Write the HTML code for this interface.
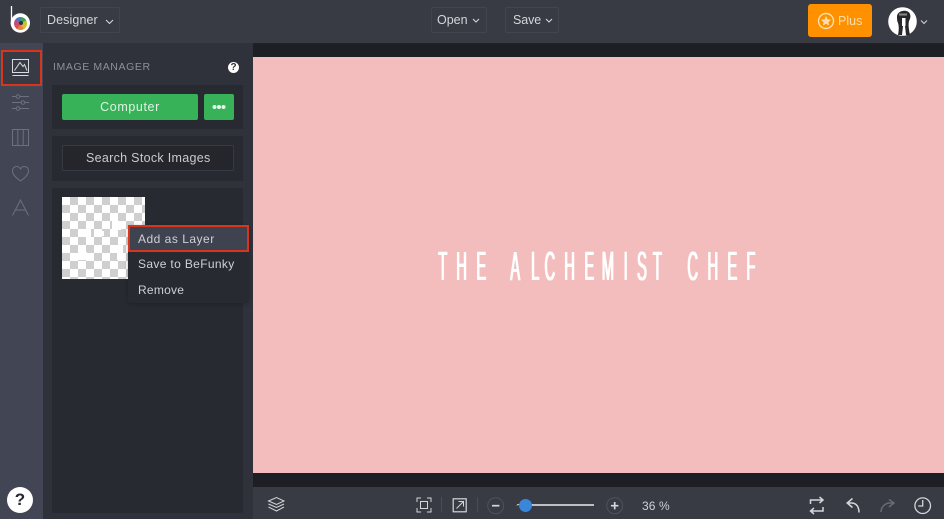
<!DOCTYPE html>
<html><head><meta charset="utf-8">
<style>
*{box-sizing:border-box}
html,body{margin:0;padding:0}
body{width:944px;height:519px;overflow:hidden;position:relative;background:#1f2025;font-family:"Liberation Sans",sans-serif;color:#d5d6da}
.a{position:absolute}
.t{position:absolute;white-space:nowrap}
.box{position:absolute;border:1px solid #41434e;border-radius:2px}
svg{position:absolute;overflow:visible}
</style></head><body>
<div class="a" style="left:253px;top:43px;width:691px;height:14px;background:#1e1f24"></div>
<div class="a" style="left:253px;top:57px;width:691px;height:416px;background:#f4bdbd"></div>
<div class="a" style="left:253px;top:473px;width:691px;height:14px;background:#1e1f24"></div>
<svg style="left:0;top:0" width="944" height="519">
<defs><filter id="w" x="-2%" y="-10%" width="104%" height="120%" filterUnits="objectBoundingBox"><feOffset in="SourceGraphic" dx="1" dy="0" result="o"/><feMerge><feMergeNode in="SourceGraphic"/><feMergeNode in="o"/></feMerge></filter></defs>
<g filter="url(#w)"><text transform="translate(0,280) scale(.36,1)" x="1216 1266 1322 1380 1416 1474 1511 1566 1622 1670 1731 1768 1812 1880 1908 1964 2019 2072" y="0" font-family="Liberation Sans" font-size="41" fill="#fff">THE ALCHEMIST CHEF</text></g></svg>

<div class="a" style="left:0;top:0;width:944px;height:43px;background:#383a44;box-shadow:0 1px 2px #22232a"></div>
<div class="a" style="left:0;top:43px;width:43px;height:476px;background:#424553"></div>
<div class="a" style="left:43px;top:43px;width:210px;height:476px;background:#30323b"></div>
<div class="a" style="left:253px;top:487px;width:691px;height:32px;background:#383a44"></div>

<!-- logo -->
<svg style="left:0;top:0" width="40" height="40">
<path d="M11.500 6V24" stroke="#fff" stroke-width="1.300" fill="none"/>
<circle cx="20.300" cy="23" r="9.700" fill="#fff"/>
</svg>
<div class="a" style="left:14px;top:16.500px;width:13px;height:13px;border-radius:50%;background:conic-gradient(#3f9f52 0 17%,#c5c533 17% 30%,#e8b32e 30% 42%,#e8823a 42% 58%,#d84f50 58% 72%,#c04a90 72% 86%,#3a7fc0 86% 100%)"></div>
<div class="a" style="left:18.500px;top:21px;width:4px;height:4px;border-radius:50%;background:#30323b"></div>
<div class="box" style="left:40px;top:7px;width:80px;height:26px;border-color:#42444f"></div>
<div class="t" style="left:47px;top:13px;font-size:12.500px;letter-spacing:.1px">Designer</div>
<svg style="left:105px;top:19px" width="10" height="6"><path d="M1 1l3.500 3.500L8 1" stroke="#d5d6da" fill="none" stroke-width="1.100"/></svg>

<div class="box" style="left:431px;top:7px;width:56px;height:26px;border-color:#42444f"></div>
<div class="t" style="left:437px;top:13px;font-size:12.500px">Open</div>
<svg style="left:472px;top:18px" width="10" height="6"><path d="M1 1l3 3 3-3" stroke="#d5d6da" fill="none" stroke-width="1.100"/></svg>
<div class="box" style="left:505px;top:7px;width:54px;height:26px;border-color:#42444f"></div>
<div class="t" style="left:513px;top:13px;font-size:12.500px;letter-spacing:-.1px">Save</div>
<svg style="left:545px;top:18px" width="10" height="6"><path d="M1 1l3 3 3-3" stroke="#d5d6da" fill="none" stroke-width="1.100"/></svg>

<div class="a" style="left:808px;top:4px;width:64px;height:33px;background:#ff9100;border-radius:3px"></div>
<svg style="left:817px;top:12px" width="18" height="18"><circle cx="9" cy="9" r="7.500" fill="none" stroke="#ffe0ac" stroke-width="1.400"/><path d="M9 4l1.500 3.300 3.500.4-2.600 2.400.7 3.500-3.100-1.800-3.100 1.800.7-3.500L4 7.700l3.500-.4z" fill="#ffe0ac"/></svg>
<div class="t" style="left:838px;top:14px;font-size:12.500px;color:#ffdca6">Plus</div>
<svg style="left:888px;top:7px" width="40" height="30">
<circle cx="14.500" cy="14.500" r="14.300" fill="#fff"/>
<path d="M9 9c1-6 11-7 13-2 1 3 0 5-1 7-1 4 0 9 1 14h-4l-1-9-2 0-1 9-4 0c1-5 1-9 0-12-1-2-1-4-1-7z" fill="#26262b"/>
<path d="M11 6.500h8v2h-8z" fill="#8a8a8a"/>
<path d="M14 11h3.500v8h-3.500z" fill="#fff"/>
<path d="M33 13.500l3 3 3-3" stroke="#cfd0d5" fill="none" stroke-width="1.100"/>
</svg>

<!-- rail -->
<div class="a" style="left:1px;top:50px;width:41px;height:36px;background:#383a45;border:2px solid #d9341c"></div>
<svg style="left:0;top:43px" width="43" height="190" fill="none" stroke="#d9dade" stroke-width="1">
<rect x="12.500" y="16.500" width="16" height="13"/>
<path d="M14.500 27.500l5.500-8 3 4 1.500-2 2.500 6"/>
<path d="M12.500 32.500h16"/>
<g stroke="#6d707d">
<path d="M12 53.500h17M12 59.500h17M12 65.500h17"/>
<circle cx="18" cy="53.500" r="1.800" fill="#424553"/><circle cx="23" cy="59.500" r="1.800" fill="#424553"/><circle cx="18" cy="65.500" r="1.800" fill="#424553"/>
<rect x="12.500" y="86.500" width="16" height="16"/><path d="M17.800 87v15M23.200 87v15"/>
<path d="M20.500 138c-4-3-8-6-8-10 0-5 6-6 8-2 2-4 8-3 8 2 0 4-4 7-8 10z"/>
<path d="M12.500 172.500l8-15.500 8 15.500M15.300 167h10.400"/>
</g>
</svg>
<div class="a" style="left:7px;top:487px;width:26px;height:26px;background:#fff;border-radius:50%;color:#26272d;font-weight:bold;font-size:17px;line-height:26px;text-align:center">?</div>

<!-- panel -->
<div class="t" style="left:53px;top:61px;font-size:10.500px;letter-spacing:.6px;color:#8d8f99">IMAGE MANAGER</div>
<div class="a" style="left:228px;top:62px;width:11px;height:11px;background:#fff;border-radius:50%;color:#30323b;font-weight:bold;font-size:10px;line-height:11px;text-align:center">?</div>
<div class="a" style="left:52px;top:85px;width:191px;height:44px;background:#282a31"></div>
<div class="a" style="left:62px;top:94px;width:136px;height:26px;background:#38b258;border-radius:2px;color:#dff3e5;font-size:12.500px;line-height:26px;text-align:center;letter-spacing:.6px">Computer</div>
<div class="a" style="left:204px;top:94px;width:30px;height:26px;background:#38b258;border-radius:2px"></div>
<svg style="left:204px;top:94px" width="30" height="26" fill="#e5f5ea"><circle cx="10.500" cy="13" r="2"/><circle cx="15" cy="13" r="2"/><circle cx="19.500" cy="13" r="2"/></svg>
<div class="a" style="left:52px;top:136px;width:191px;height:45px;background:#282a31"></div>
<div class="box" style="left:62px;top:145px;width:172px;height:26px;background:#24262c;border-color:#383a43"></div>
<div class="t" style="left:86px;top:151px;font-size:12.500px;letter-spacing:.3px;color:#c9cacf">Search Stock Images</div>
<div class="a" style="left:52px;top:188px;width:191px;height:325px;background:#282a31"></div>
<div class="a" style="left:61.500px;top:197px;width:83px;height:82px;background:repeating-conic-gradient(#cfcfcf 0 25%,#fff 0 50%) 0 0/16px 16px"></div>
<svg style="left:61px;top:197px" width="84" height="82" fill="#fff"><path d="M25 26h5v14h-5zM51 24h9v9h-9zM56 48h6v15h-6zM17 55h9v8h-9zM35 34h8v5h-8z"/></svg>
<div class="a" style="left:128px;top:225px;width:121px;height:78px;background:#282a31;border-radius:3px;box-shadow:0 1px 4px rgba(0,0,0,.25)"></div>
<div class="a" style="left:128px;top:225px;width:121px;height:27px;background:#3f424f;border:2px solid #d9341c"></div>
<div class="t" style="left:138px;top:232px;font-size:12px;letter-spacing:.5px;color:#cfd0d5">Add as Layer</div>
<div class="t" style="left:138px;top:257px;font-size:12px;letter-spacing:.35px;color:#cfd0d5">Save to BeFunky</div>
<div class="t" style="left:138px;top:283px;font-size:12px;letter-spacing:.25px;color:#cfd0d5">Remove</div>

<!-- bottom bar -->
<svg style="left:253px;top:487px" width="691" height="32" fill="none" stroke="#d5d6da" stroke-width="1">
<path d="M15.500 14l8-3.500 7.500 3.500-7.500 3.500zM15.500 17l8 3.500 7.500-3.500M15.500 20l8 4 7.500-4"/>
<path d="M164 15v-4h4M174 11h4v4M178 21v4h-4M168 25h-4v-4"/>
<rect x="167.500" y="14.500" width="7" height="7"/>
<path d="M188.500 10v15.500M224.500 10v15.500" stroke="#4a4c57"/>
<rect x="200.200" y="11.800" width="13" height="13" stroke-width="1.200"/><path d="M203.500 21.500l7-7M205.500 14.500h5v5"/>
<circle cx="242.700" cy="18.700" r="8" stroke="#4f515c"/><path d="M239 18.700h7.400" stroke-width="1.700"/>
<path d="M264 18h77" stroke="#eceded" stroke-width="1.400"/>
<circle cx="361.700" cy="18.700" r="8" stroke="#4f515c"/><path d="M358 18.700h7.400M361.700 15v7.400" stroke-width="1.700"/>
<path d="M557.500 17v-4h12.500M566.500 10l3.500 3-3.500 3M570 20v4h-12.500M561 21l-3.500 3 3.500 3" stroke-width="1.500"/>
<path d="M599.500 11.500l-5.300 4.500 5.300 4.500M594.500 16h4c5 0 7.500 4 7.500 9.500" stroke-width="1.500"/>
<path d="M636 12.500l5 3.500-5 4M641 16h-4c-5 0-9 4-9 9" stroke="#686a75" stroke-width="1.500"/>
<circle cx="669.700" cy="18.700" r="7.800" stroke-width="1.300"/><path d="M669.700 13v6h-4.500" stroke-width="1.300"/>
</svg>
<div class="a" style="left:518.500px;top:498.500px;width:13px;height:13px;border-radius:50%;background:#3a86d8"></div>
<div class="a" style="left:516px;top:504.500px;width:4px;height:1px;background:#5f616c"></div>
<div class="t" style="left:642px;top:499px;font-size:12px;letter-spacing:.1px;color:#cfd0d5">36 %</div>
</body></html>
